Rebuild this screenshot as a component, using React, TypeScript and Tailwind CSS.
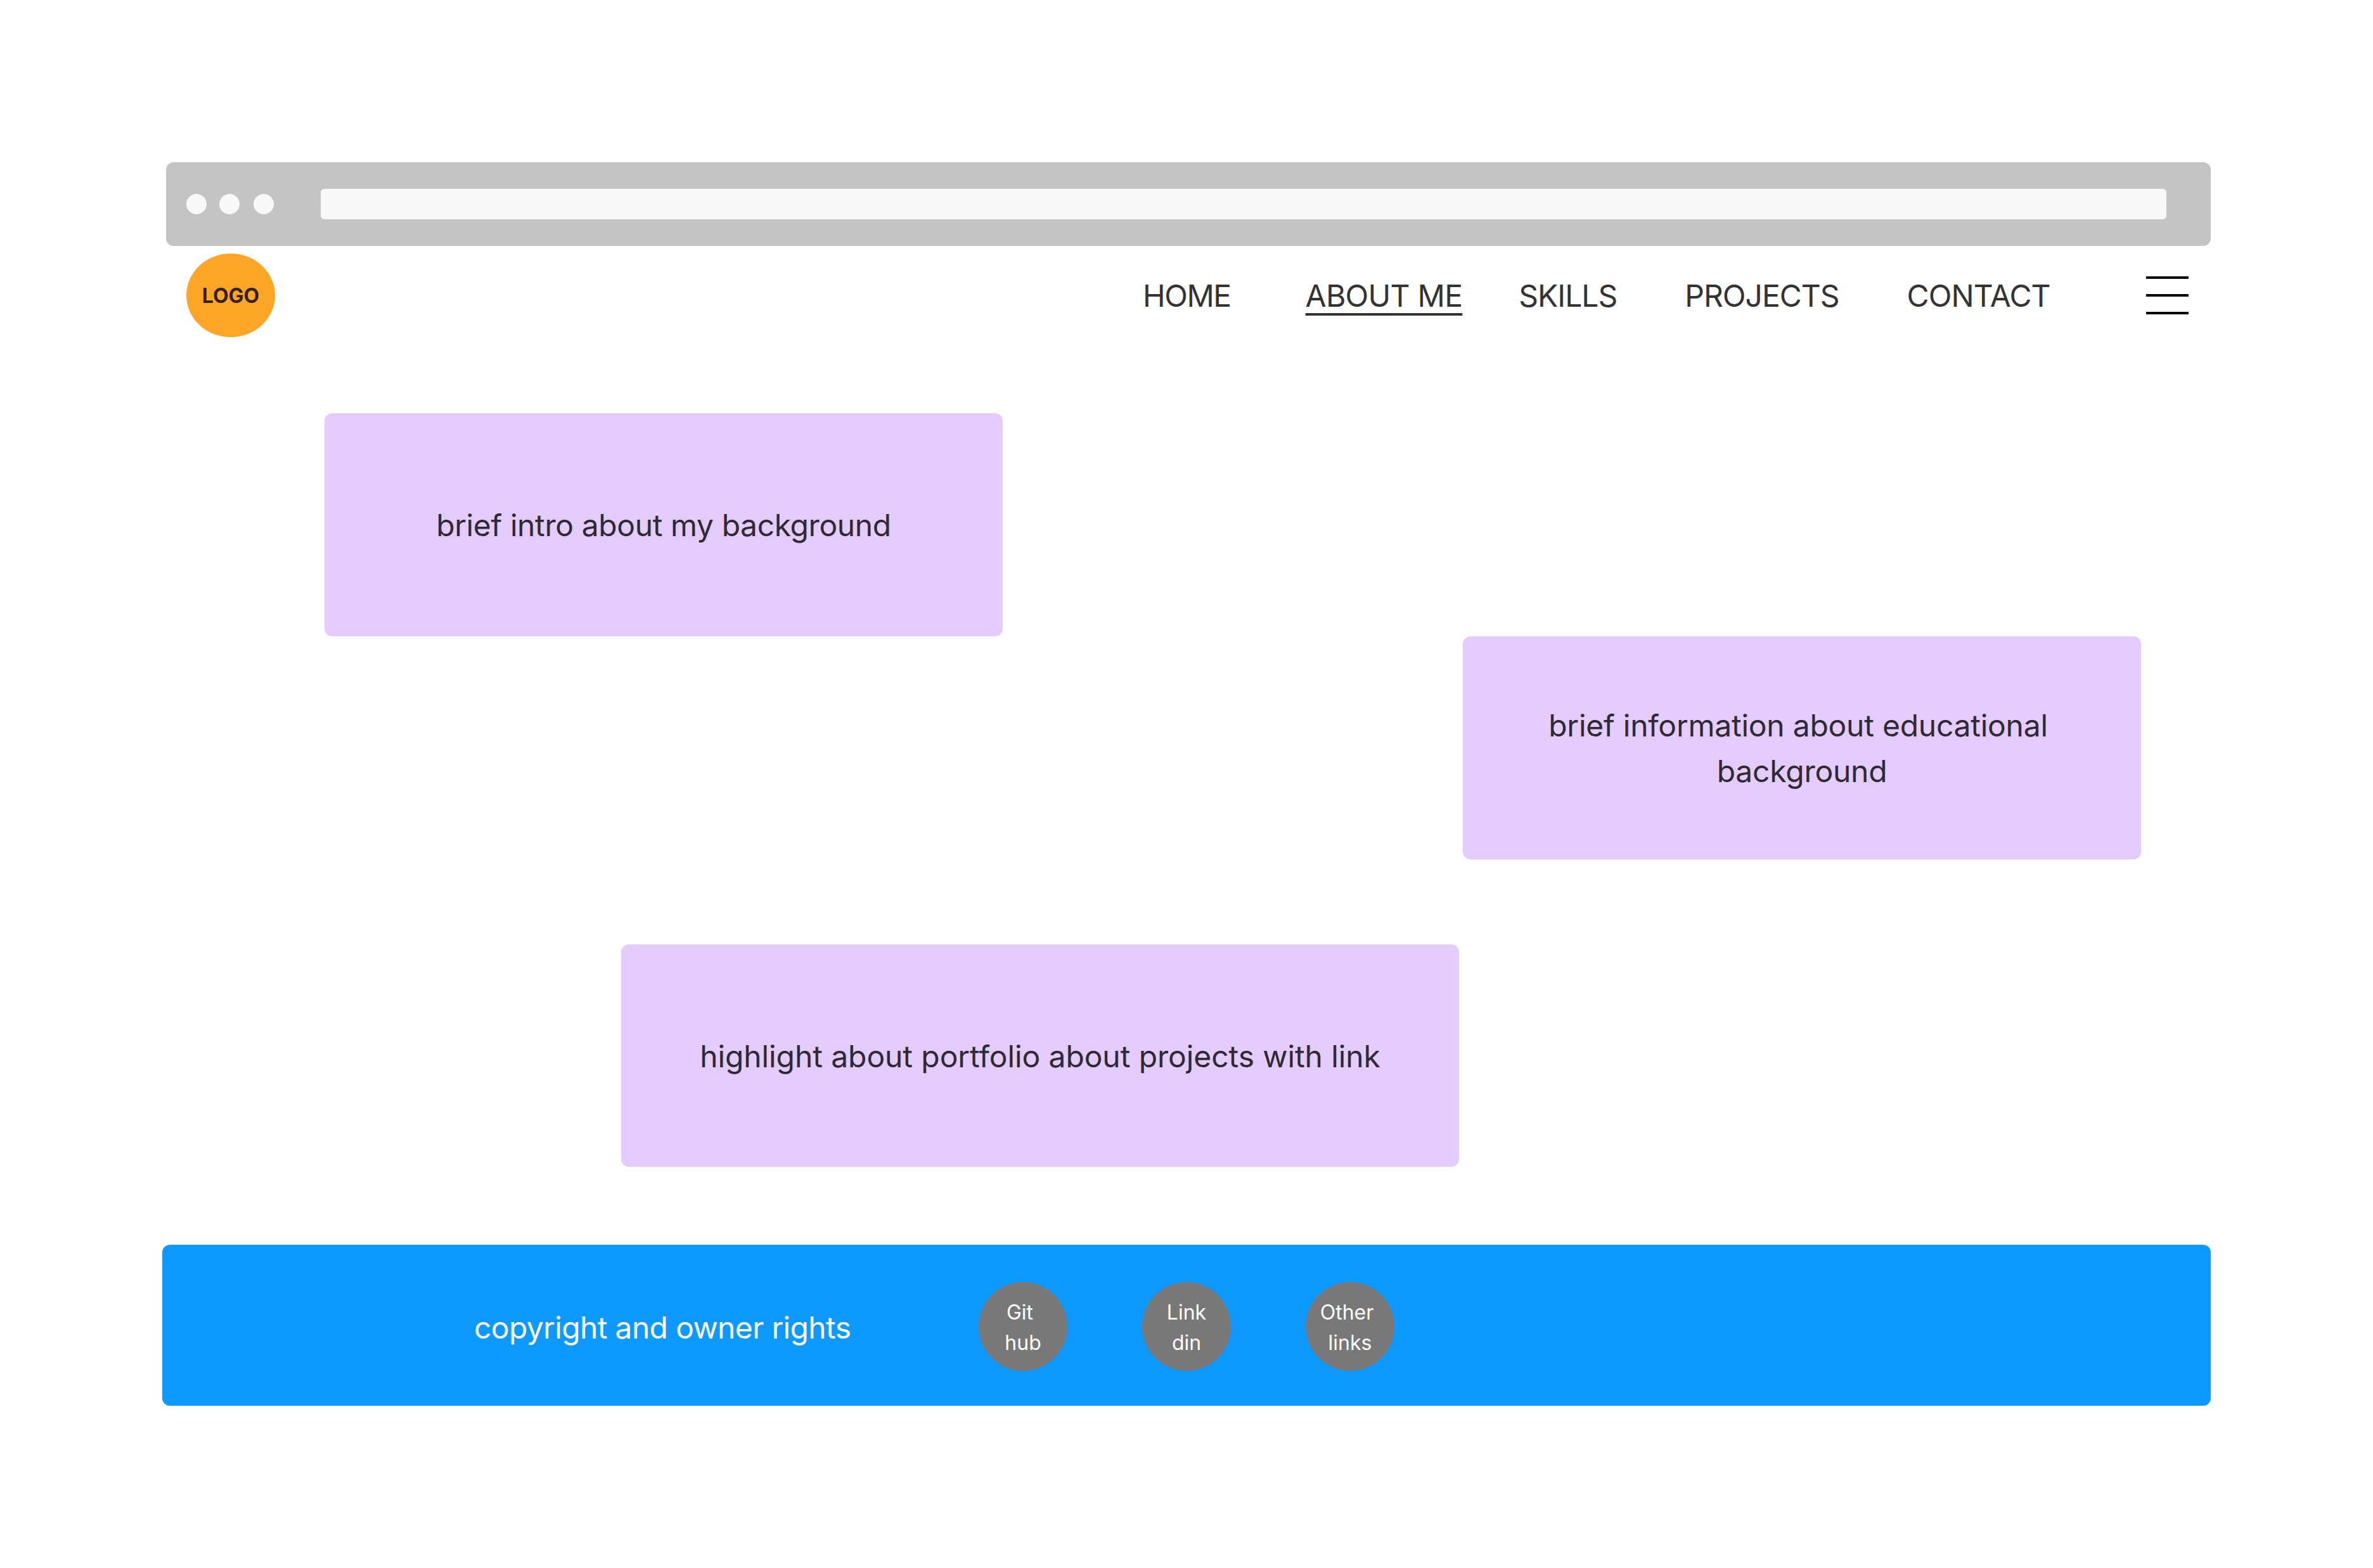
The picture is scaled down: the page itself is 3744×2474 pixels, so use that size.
const navItems = [
  { label: 'HOME', className: 'tracking-[-1.5px]' },
  { label: 'ABOUT ME', className: 'ml-[118px] tracking-[-0.75px] underline decoration-[4px] underline-offset-[10px]' },
  { label: 'SKILLS', className: 'ml-[89px] tracking-[-1px]' },
  { label: 'PROJECTS', className: 'ml-[107px] tracking-[-1px]' },
  { label: 'CONTACT', className: 'ml-[107px] tracking-[-0.9px]' },
];

const socialLinks = [
  { top: 'Git', bottom: 'hub', topClass: 'pr-[10px]' },
  { top: 'Link', bottom: 'din', topClass: '' },
  { top: 'Other', bottom: 'links', topClass: 'pr-[10px]' },
];

function BrowserBar() {
  return (
    <div className="ml-[262px] flex h-[132px] w-[3226px] items-start rounded-[12px] bg-[#c4c4c4] pt-[42px] pl-[32px]">
      {/* Window dots */}
      <div className="mt-[8px] flex">
        <div className="h-[32px] w-[32px] rounded-full bg-[#f8f8f8]" />
        <div className="ml-[20px] h-[32px] w-[32px] rounded-full bg-[#f8f8f8]" />
        <div className="ml-[22px] h-[32px] w-[32px] rounded-full bg-[#f8f8f8]" />
      </div>
      <div className="ml-[74px] h-[48px] w-[2912px] rounded-[6px] bg-[#f8f8f8]" />
    </div>
  );
}

function Header() {
  return (
    <div className="mt-[12px] ml-[294px] flex h-[132px] items-center">
      <div className="flex h-[132px] w-[140px] items-center justify-center rounded-[50%] bg-[#ffa629] pt-[1px] text-[32px] font-bold text-[#332108]">
        LOGO
      </div>
      <nav className="ml-[1369px] flex items-center pt-[1px] text-[48px] leading-[72px] text-[#333333]">
        {navItems.map((item) => (
          <a key={item.label} className={item.className}>
            {item.label}
          </a>
        ))}
      </nav>
      <div className="ml-[151px] flex w-[67px] flex-col gap-[24px]">
        <div className="h-[4px] bg-black" />
        <div className="h-[4px] bg-black" />
        <div className="h-[4px] bg-black" />
      </div>
    </div>
  );
}

function Footer() {
  return (
    <footer className="mt-[123px] ml-[256px] flex h-[254px] w-[3232px] items-center rounded-[12px] bg-[#0d99ff] text-white">
      <p className="ml-[492px] w-[600px] pt-[7px] text-[48px] leading-[72px] tracking-[-0.65px] whitespace-nowrap">
        copyright and owner rights
      </p>
      <div className="ml-[196px] flex gap-[118px] pt-[3px]">
        {socialLinks.map((link) => (
          <div
            key={link.top}
            className="flex h-[140px] w-[140px] flex-col items-center justify-center rounded-full bg-[#787878] pt-[4px] text-[32px] leading-[48px]"
          >
            <span className={link.topClass}>{link.top}</span>
            <span>{link.bottom}</span>
          </div>
        ))}
      </div>
    </footer>
  );
}

export default function App() {
  return (
    <div className="h-[2474px] w-[3744px] overflow-hidden bg-white pt-[256px] font-['Inter',sans-serif]">
      <BrowserBar />
      <Header />

      <main className="text-[48px] leading-[72px] text-[#2e2933]">
        <div className="mt-[120px] ml-[512px] flex h-[352px] w-[1070px] items-center justify-center rounded-[12px] bg-[#e4ccff] pt-[2px] text-center tracking-[-0.4px]">
          brief intro about my background
        </div>
        <div className="ml-[2308px] flex h-[352px] w-[1070px] flex-col items-center justify-center rounded-[12px] bg-[#e4ccff] pt-[2px] text-center tracking-[-0.25px]">
          <span className="pr-[12px]">brief information about educational</span>
          <span>background</span>
        </div>
        <div className="mt-[134px] ml-[980px] flex h-[351px] w-[1322px] items-center justify-center rounded-[12px] bg-[#e4ccff] pt-[2px] text-center tracking-[-0.1px]">
          highlight about portfolio about projects with link
        </div>
      </main>

      <Footer />
    </div>
  );
}
